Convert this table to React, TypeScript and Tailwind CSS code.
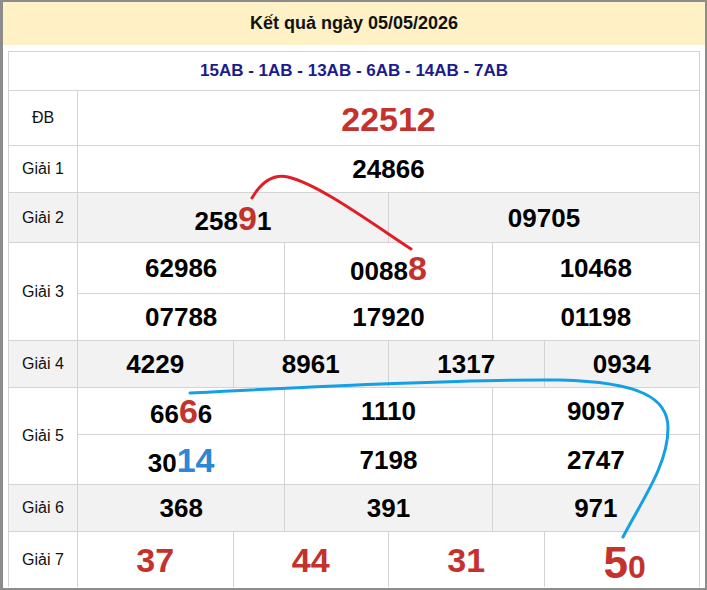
import React from "react";

type Part = { t: string; c?: "red" | "blue" };

const line = "border-[#d3d3d3]";

function Num({ parts, size = "text-[26px]" }: { parts: Part[]; size?: string }) {
  return (
    <span className={`font-bold leading-none text-black ${size}`}>
      {parts.map((p, i) =>
        p.c === "red" ? (
          <span key={i} className="text-[34px] text-[#c3322d]">
            {p.t}
          </span>
        ) : p.c === "blue" ? (
          <span key={i} className="text-[34px] text-[#2e86d4]">
            {p.t}
          </span>
        ) : (
          <span key={i}>{p.t}</span>
        )
      )}
    </span>
  );
}

function Cells({ items, className = "" }: { items: React.ReactNode[]; className?: string }) {
  return (
    <div className={`flex ${className}`}>
      {items.map((it, i) => (
        <div
          key={i}
          className={`flex flex-1 basis-0 items-center justify-center ${line} ${i > 0 ? "border-l" : ""}`}
        >
          {it}
        </div>
      ))}
    </div>
  );
}

function Row({
  label,
  gray,
  h,
  children,
}: {
  label: string;
  gray?: boolean;
  h: string;
  children: React.ReactNode;
}) {
  return (
    <div className={`flex border-t ${line} ${h} ${gray ? "bg-[#f2f2f2]" : "bg-white"}`}>
      <div className={`flex w-[69px] shrink-0 items-center justify-center border-r ${line} text-[16px] text-[#111]`}>
        {label}
      </div>
      <div className="flex flex-1 flex-col">{children}</div>
    </div>
  );
}

const n = (s: string) => <Num parts={[{ t: s }]} />;

export default function App() {
  return (
    <div className="relative h-[590px] w-[707px] font-['Liberation_Sans',Arial,sans-serif]">
      <div className="flex h-full w-full flex-col border-x-[3px] border-y-2 border-[#8c8c8c] border-r-2 bg-white">
        <div className="flex h-[43px] shrink-0 items-center justify-center bg-[#fdf1c5] text-[18px] font-bold text-[#111]">
          Kết quả ngày 05/05/2026
        </div>

        <div className={`mx-[5px] mt-[6px] border ${line} border-b-0`}>
          <div className="flex h-[38px] items-center justify-center text-[17px] font-bold text-[#1b1b8e]">
            15AB - 1AB - 13AB - 6AB - 14AB - 7AB
          </div>

          <Row label="ĐB" h="h-[55px]">
            <div className="flex flex-1 items-center justify-center pt-[2px]">
              <span className="text-[34px] font-bold leading-none text-[#c3322d]">22512</span>
            </div>
          </Row>

          <Row label="Giải 1" h="h-[47px]">
            <div className="flex flex-1 items-center justify-center">{n("24866")}</div>
          </Row>

          <Row label="Giải 2" gray h="h-[50px]">
            <Cells
              className="flex-1"
              items={[
                <Num parts={[{ t: "258" }, { t: "9", c: "red" }, { t: "1" }]} />,
                n("09705"),
              ]}
            />
          </Row>

          <Row label="Giải 3" h="h-[98px]">
            <Cells
              className="h-[50px]"
              items={[n("62986"), <Num parts={[{ t: "0088" }, { t: "8", c: "red" }]} />, n("10468")]}
            />
            <Cells className={`flex-1 border-t ${line}`} items={[n("07788"), n("17920"), n("01198")]} />
          </Row>

          <Row label="Giải 4" gray h="h-[47px]">
            <Cells className="flex-1" items={[n("4229"), n("8961"), n("1317"), n("0934")]} />
          </Row>

          <Row label="Giải 5" h="h-[97px]">
            <Cells
              className="h-[46px]"
              items={[<Num parts={[{ t: "66" }, { t: "6", c: "red" }, { t: "6" }]} />, n("1110"), n("9097")]}
            />
            <Cells
              className={`flex-1 border-t ${line}`}
              items={[<Num parts={[{ t: "30" }, { t: "14", c: "blue" }]} />, n("7198"), n("2747")]}
            />
          </Row>

          <Row label="Giải 6" gray h="h-[47px]">
            <Cells className="flex-1" items={[n("368"), n("391"), n("971")]} />
          </Row>

          <Row label="Giải 7" h="h-[56px]">
            <Cells
              className="flex-1"
              items={[
                <span className="text-[34px] font-bold leading-none text-[#c3322d]">37</span>,
                <span className="text-[34px] font-bold leading-none text-[#c3322d]">44</span>,
                <span className="text-[34px] font-bold leading-none text-[#c3322d]">31</span>,
                <span className="ml-[6px] mt-[6px] font-bold leading-none text-[#c3322d]">
                  <span className="text-[44px]">5</span>
                  <span className="text-[32px]">0</span>
                </span>,
              ]}
            />
          </Row>
        </div>
      </div>

      <svg
        className="pointer-events-none absolute left-0 top-0"
        width="707"
        height="590"
        viewBox="0 0 707 590"
        fill="none"
      >
        <path
          d="M252 198 C 262 181 274 174 288 177 C 318 184 370 222 411 249"
          stroke="#e01e26"
          strokeWidth="3"
          strokeLinecap="round"
        />
        <path
          d="M190 393 C 330 386 470 379 560 380 C 640 382 668 398 668 428 C 668 465 642 500 623 537"
          stroke="#14a0e3"
          strokeWidth="3"
          strokeLinecap="round"
        />
      </svg>
    </div>
  );
}
